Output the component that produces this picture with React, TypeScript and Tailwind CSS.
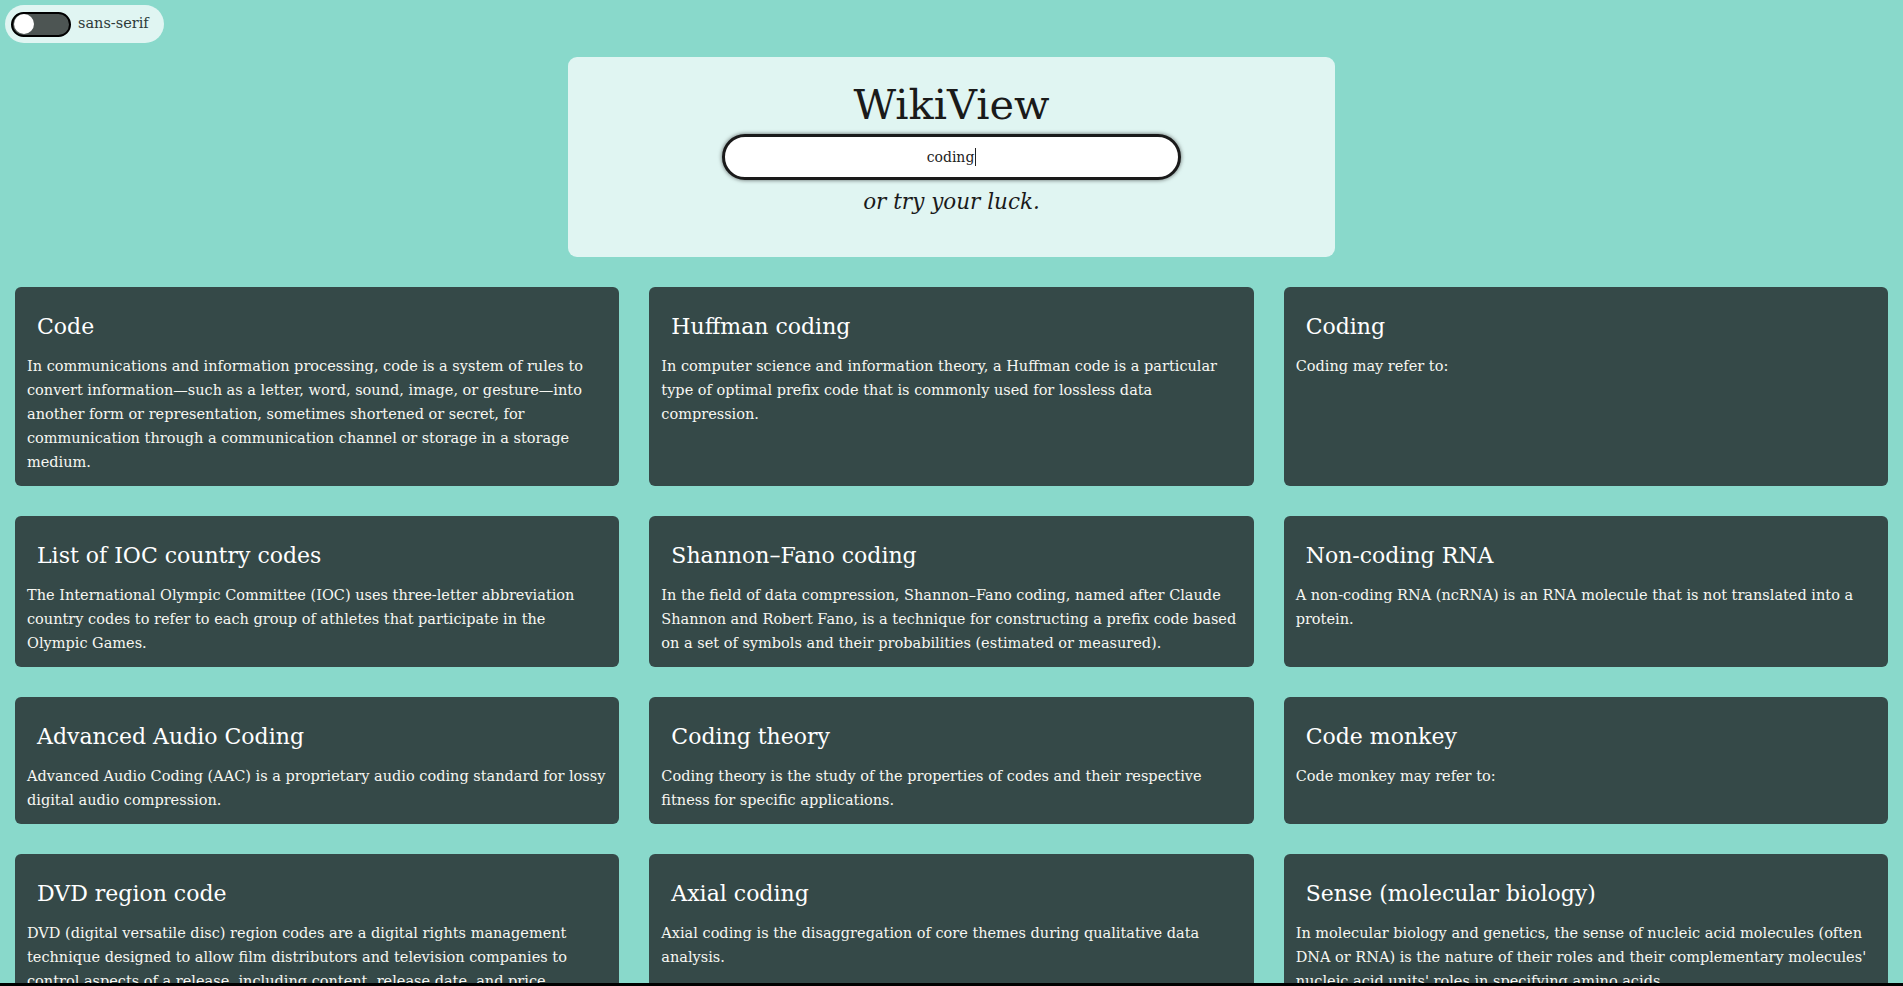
import React from "react";

type Item = { title: string; text: string };

const items: Item[] = [
  {
    title: "Code",
    text: "In communications and information processing, code is a system of rules to convert information—such as a letter, word, sound, image, or gesture—into another form or representation, sometimes shortened or secret, for communication through a communication channel or storage in a storage medium.",
  },
  {
    title: "Huffman coding",
    text: "In computer science and information theory, a Huffman code is a particular type of optimal prefix code that is commonly used for lossless data compression.",
  },
  { title: "Coding", text: "Coding may refer to:" },
  {
    title: "List of IOC country codes",
    text: "The International Olympic Committee (IOC) uses three-letter abbreviation country codes to refer to each group of athletes that participate in the Olympic Games.",
  },
  {
    title: "Shannon–Fano coding",
    text: "In the field of data compression, Shannon–Fano coding, named after Claude Shannon and Robert Fano, is a technique for constructing a prefix code based on a set of symbols and their probabilities (estimated or measured).",
  },
  {
    title: "Non-coding RNA",
    text: "A non-coding RNA (ncRNA) is an RNA molecule that is not translated into a protein.",
  },
  {
    title: "Advanced Audio Coding",
    text: "Advanced Audio Coding (AAC) is a proprietary audio coding standard for lossy digital audio compression.",
  },
  {
    title: "Coding theory",
    text: "Coding theory is the study of the properties of codes and their respective fitness for specific applications.",
  },
  { title: "Code monkey", text: "Code monkey may refer to:" },
  {
    title: "DVD region code",
    text: "DVD (digital versatile disc) region codes are a digital rights management technique designed to allow film distributors and television companies to control aspects of a release, including content, release date, and price, according to the region of the world.",
  },
  {
    title: "Axial coding",
    text: "Axial coding is the disaggregation of core themes during qualitative data analysis.",
  },
  {
    title: "Sense (molecular biology)",
    text: "In molecular biology and genetics, the sense of nucleic acid molecules (often DNA or RNA) is the nature of their roles and their complementary molecules' nucleic acid units' roles in specifying amino acids.",
  },
];

function Card({ item }: { item: Item }) {
  return (
    <div className="rounded-[6px] bg-[#354948] p-3 text-[#f7f7f2]">
      <h2 className="mt-[12px] mb-[11px] pl-[10px] text-[22px] leading-[32px] font-normal text-white">
        {item.title}
      </h2>
      <p className="text-[14.5px] leading-[24px]">{item.text}</p>
    </div>
  );
}

export default function App() {
  return (
    <div className="relative h-screen overflow-hidden bg-[#89d9cb] font-['DejaVu_Serif',serif]">
      <div className="pl-[5px] pt-[5px]">
        <div className="inline-flex h-[38px] items-center gap-[7px] rounded-full bg-[#e0f5f2] pl-[6px] pr-[15px]">
          <div className="flex h-[25px] w-[60px] items-center rounded-full border-2 border-black bg-[#4d5553] pl-[1px]">
            <div className="h-[20px] w-[20px] rounded-full bg-white" />
          </div>
          <span className="text-[14.5px] text-[#2e3b39]">sans-serif</span>
        </div>
      </div>

      <div className="mx-auto mt-[14px] flex h-[200px] w-[767px] flex-col items-center rounded-[9px] bg-[#e0f5f2] pt-[24px]">
        <h1 className="text-[41.5px] leading-[48px] font-normal text-[#1a1a1a]">WikiView</h1>
        <div className="mt-[5px] flex h-[46px] w-[459px] items-center justify-center rounded-full border-[3px] border-[#1a1a1a] bg-white shadow-[0_0_4px_rgba(0,0,0,0.6)]">
          <span className="text-[14px] text-[#222]">coding</span>
          <span className="ml-[1px] h-[18px] w-[1px] bg-[#222]" />
        </div>
        <p className="mt-[7px] text-[21.5px] leading-[30px] italic text-[#1a1a1a]">or try your luck.</p>
      </div>

      <div className="mt-[30px] grid grid-cols-3 gap-[30px] px-[15px]">
        {items.map((it) => (
          <Card key={it.title} item={it} />
        ))}
      </div>

      <div className="fixed bottom-0 left-0 h-[3px] w-full bg-black" />
    </div>
  );
}
